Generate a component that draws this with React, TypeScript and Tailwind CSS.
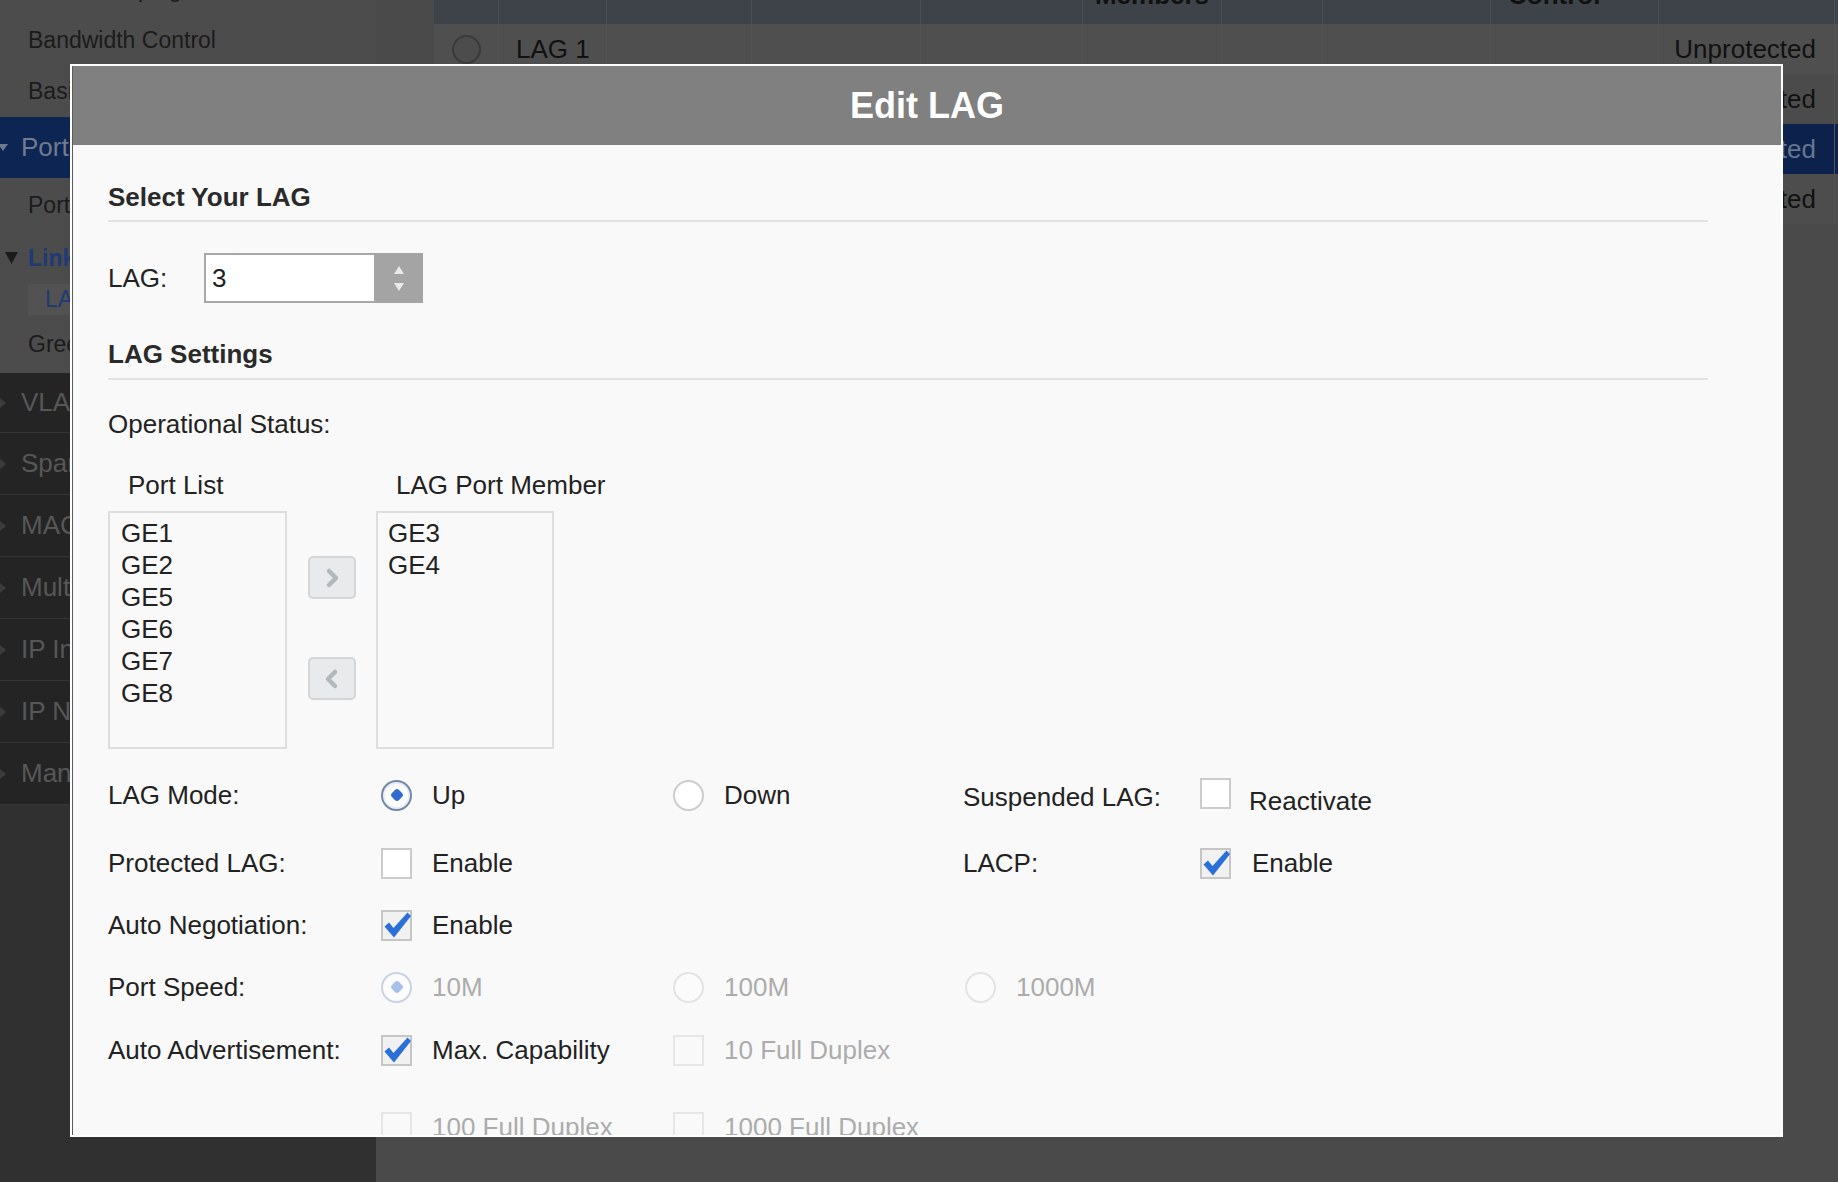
import React from 'react';

const colWidths = [65, 108, 145, 169, 162, 139, 101, 168, 168, 176];

const Radio = ({ checked = false, disabled = false }: { checked?: boolean; disabled?: boolean }) => {
  const ring = disabled
    ? checked
      ? 'border-[#c9d3e4] bg-[#fcfcfc]'
      : 'border-[#e3e3e3] bg-[#fbfbfb]'
    : checked
      ? 'border-[#7487a6] bg-white shadow-[inset_0_0_0_2px_#e9eef6]'
      : 'border-[#cdcdcd] bg-white';
  return (
    <span className={`flex h-[31px] w-[31px] shrink-0 items-center justify-center rounded-full border-2 ${ring}`}>
      {checked && (
        <span className={`h-[10px] w-[10px] rotate-45 rounded-[3px] ${disabled ? 'bg-[#a8c0ea]' : 'bg-[#2e6cd1]'}`} />
      )}
    </span>
  );
};

const Check = ({ checked = false, disabled = false }: { checked?: boolean; disabled?: boolean }) => {
  const box = disabled
    ? 'border-[#e6e6e6] bg-[#f9f9f9]'
    : checked
      ? 'border-[#c6c6c6] bg-[#f1f1f1]'
      : 'border-[#cbcbcb] bg-white';
  return (
    <span className={`relative block h-[31px] w-[31px] shrink-0 border-2 ${box}`}>
      {checked && (
        <svg viewBox="0 0 31 31" className="absolute -left-[2px] -top-[2px] h-[31px] w-[31px]">
          <path d="M3.5 16.5 L8 12.5 L12.5 18 L26.5 2.5 L30 6 L13 27.5 Z" fill="#2b6fd9" />
        </svg>
      )}
    </span>
  );
};

const ArrowButton = ({ dir }: { dir: 'left' | 'right' }) => (
  <div className="flex h-[43px] w-[48px] items-center justify-center rounded-[5px] border-2 border-[#d3d5d6] bg-[#e8eaeb]">
    <svg viewBox="0 0 16 22" className="h-[22px] w-[16px]">
      <path
        d={dir === 'right' ? 'M5 4 L12 11 L5 18' : 'M11 4 L4 11 L11 18'}
        stroke="#b2b9bd"
        strokeWidth="4.5"
        fill="none"
        strokeLinecap="round"
        strokeLinejoin="round"
      />
    </svg>
  </div>
);

const NavTriangle = () => (
  <svg viewBox="0 0 6 10" className="h-[10px] w-[6px] shrink-0">
    <path d="M0 0 L6 5 L0 10 Z" fill="#3c3c3c" />
  </svg>
);

const Sidebar = () => (
  <aside className="flex w-[376px] shrink-0 flex-col">
    <div className="flex h-[373px] flex-col bg-[#4c4c4c] text-[23px] text-[#1b1b1b]">
      <div className="-mt-[36px] flex h-[51px] items-center pl-[28px]">Traffic Shaping</div>
      <div className="flex h-[51px] items-center pl-[28px]">Bandwidth Control</div>
      <div className="flex h-[51px] items-center pl-[28px]">Basic Settings</div>
      <div className="flex h-[61px] items-center bg-[#0d2553] text-[26px] text-[#717a8e]">
        <svg viewBox="0 0 10 7" className="-ml-[2px] h-[7px] w-[10px]">
          <path d="M0 0 L10 0 L5 7 Z" fill="#6f7a90" />
        </svg>
        <span className="pl-[13px]">Port Management</span>
      </div>
      <div className="flex h-[54px] items-center pl-[28px]">Port Settings</div>
      <div className="flex h-[52px] items-center font-bold text-[#1f3a75]">
        <svg viewBox="0 0 13 12" className="ml-[5px] h-[12px] w-[13px]">
          <path d="M0 0 L13 0 L6.5 12 Z" fill="#1b1b1b" />
        </svg>
        <span className="pl-[10px]">Link Aggregation</span>
      </div>
      <div className="ml-[28px] flex h-[31px] items-center bg-[#525252] pl-[17px] text-[#1f3a75]">LAG Management</div>
      <div className="flex flex-1 items-center pl-[28px]">Green Ethernet</div>
    </div>
    <div className="bg-[#242424] text-[26px] text-[#575757]">
      {[
        'VLAN Management',
        'Spanning Tree',
        'MAC Address Tables',
        'Multicast',
        'IP Interface',
        'IP Network Services',
        'Management',
      ].map((item, idx) => (
        <div
          key={item}
          className={`flex items-center border-b border-[#363636] ${idx === 0 ? 'h-[60px]' : 'h-[62px]'}`}
        >
          <NavTriangle />
          <span className="whitespace-nowrap pl-[15px]">{item}</span>
        </div>
      ))}
    </div>
    <div className="flex-1 bg-[#303030]" />
  </aside>
);

const tableRows = [
  { bg: 'bg-[#4f4f4f]', text: 'text-[#111]', name: 'LAG 1' },
  { bg: 'bg-[#4b4b4b]', text: 'text-[#111]', name: 'LAG 2' },
  { bg: 'bg-[#0c224d]', text: 'text-[#66768f]', name: 'LAG 3' },
  { bg: 'bg-[#4d4d4d]', text: 'text-[#111]', name: 'LAG 4' },
];

const MainTable = () => (
  <main className="flex-1 bg-[#4a4a4a] pl-[58px]">
    <div className="flex h-[24px] bg-[#3e434a]">
      {colWidths.map((w, i) => (
        <div
          key={i}
          style={{ width: w }}
          className="h-[24px] shrink-0 overflow-hidden border-r border-[#4b5058] text-[26px] font-bold leading-[26px] text-[#111]"
        >
          {i === 5 && <div className="-mt-[18px] text-center">Members</div>}
          {i === 8 && <div className="-mt-[18px] pl-[17px]">Control</div>}
        </div>
      ))}
    </div>
    {tableRows.map((row) => (
      <div key={row.name} className={`flex h-[50px] ${row.bg} ${row.text} text-[26px]`}>
        {colWidths.map((w, i) => (
          <div
            key={i}
            style={{ width: w }}
            className="flex h-[50px] shrink-0 items-center border-r border-[#535353]"
          >
            {i === 0 && (
              <span className="ml-[18px] h-[29px] w-[29px] rounded-full border-2 border-[#3a3a3a] bg-[#4c4c4c]" />
            )}
            {i === 1 && <span className="whitespace-nowrap pl-[17px]">{row.name}</span>}
            {i === 9 && <span className="ml-auto pr-[18px]">Unprotected</span>}
          </div>
        ))}
      </div>
    ))}
  </main>
);

const Option = ({
  control,
  label,
  disabled = false,
  width,
}: {
  control: React.ReactNode;
  label: string;
  disabled?: boolean;
  width: string;
}) => (
  <div className={`flex items-center gap-[20px] ${width}`}>
    {control}
    <span className={`whitespace-nowrap ${disabled ? 'text-[#acacac]' : ''}`}>{label}</span>
  </div>
);

const EditLagModal = () => (
  <div className="absolute left-[70px] top-[64px] flex h-[1073px] w-[1713px] flex-col border-2 border-white">
    <div className="flex flex-1 flex-col overflow-hidden border-l border-[#5c5c5c]">
      <div className="flex h-[79px] shrink-0 items-center justify-center bg-[#808080] text-[36px] font-bold text-white">
        Edit LAG
      </div>
      <div className="flex-1 overflow-hidden bg-[#f9f9f9] pl-[35px] pr-[73px] pt-[37px] text-[26px] leading-[30px] text-[#222]">
        <h2 className="font-bold text-[#2a2a2a]">Select Your LAG</h2>
        <div className="mt-[8px] h-[2px] bg-[#e2e2e2]" />
        <div className="mt-[31px] flex h-[50px] items-center">
          <span className="w-[96px]">LAG:</span>
          <div className="flex h-[50px] w-[170px] items-center border-y-2 border-l-2 border-[#a7a7a7] bg-white pl-[6px]">
            3
          </div>
          <div className="flex h-[50px] w-[49px] flex-col items-center justify-center gap-[9px] bg-[#a4a4a4]">
            <svg viewBox="0 0 10 8" className="h-[8px] w-[10px]">
              <path d="M5 0 L10 8 L0 8 Z" fill="#e9e9e9" />
            </svg>
            <svg viewBox="0 0 10 8" className="h-[8px] w-[10px]">
              <path d="M0 0 L10 0 L5 8 Z" fill="#e9e9e9" />
            </svg>
          </div>
        </div>

        <h2 className="mt-[36px] font-bold text-[#2a2a2a]">LAG Settings</h2>
        <div className="mt-[9px] h-[2px] bg-[#e2e2e2]" />
        <div className="mt-[29px]">Operational Status:</div>

        <div className="mt-[31px] flex">
          <div className="w-[179px]">
            <div className="whitespace-nowrap pl-[20px]">Port List</div>
            <div className="mt-[11px] h-[238px] border-2 border-[#dedede] pl-[11px] pt-[4px] leading-[32px]">
              {['GE1', 'GE2', 'GE5', 'GE6', 'GE7', 'GE8'].map((p) => (
                <div key={p}>{p}</div>
              ))}
            </div>
          </div>
          <div className="flex w-[89px] flex-col gap-[58px] pl-[21px] pt-[86px]">
            <ArrowButton dir="right" />
            <ArrowButton dir="left" />
          </div>
          <div className="w-[178px]">
            <div className="whitespace-nowrap pl-[20px]">LAG Port Member</div>
            <div className="mt-[11px] h-[238px] border-2 border-[#dedede] pl-[10px] pt-[4px] leading-[32px]">
              {['GE3', 'GE4'].map((p) => (
                <div key={p}>{p}</div>
              ))}
            </div>
          </div>
        </div>

        <div className="mt-[16px] flex h-[60px] items-center">
          <span className="w-[273px]">LAG Mode:</span>
          <Option width="w-[292px]" control={<Radio checked />} label="Up" />
          <Option width="w-[290px]" control={<Radio />} label="Down" />
          <span className="w-[237px] translate-y-[2px] whitespace-nowrap">Suspended LAG:</span>
          <div className="flex items-center gap-[18px]">
            <span className="-translate-y-[2px]">
              <Check />
            </span>
            <span className="translate-y-[6px]">Reactivate</span>
          </div>
        </div>

        <div className="mt-[8px] flex h-[60px] items-center">
          <span className="w-[273px]">Protected LAG:</span>
          <Option width="w-[292px]" control={<Check />} label="Enable" />
          <div className="w-[290px]" />
          <span className="w-[237px]">LACP:</span>
          <div className="flex items-center gap-[21px]">
            <Check checked />
            <span>Enable</span>
          </div>
        </div>

        <div className="mt-[2px] flex h-[60px] items-center">
          <span className="w-[273px]">Auto Negotiation:</span>
          <Option width="w-[292px]" control={<Check checked />} label="Enable" />
        </div>

        <div className="mt-[2px] flex h-[60px] items-center">
          <span className="w-[273px]">Port Speed:</span>
          <Option width="w-[292px]" control={<Radio checked disabled />} label="10M" disabled />
          <Option width="w-[292px]" control={<Radio disabled />} label="100M" disabled />
          <Option width="w-[240px]" control={<Radio disabled />} label="1000M" disabled />
        </div>

        <div className="mt-[3px] flex h-[60px] items-center">
          <span className="w-[273px]">Auto Advertisement:</span>
          <Option width="w-[292px]" control={<Check checked />} label="Max. Capability" />
          <Option width="w-[290px]" control={<Check disabled />} label="10 Full Duplex" disabled />
        </div>

        <div className="mt-[17px] flex h-[60px] items-center">
          <span className="w-[273px]" />
          <Option width="w-[292px]" control={<Check disabled />} label="100 Full Duplex" disabled />
          <Option width="w-[290px]" control={<Check disabled />} label="1000 Full Duplex" disabled />
        </div>
      </div>
    </div>
  </div>
);

export default function App() {
  return (
    <div className="relative h-[1182px] w-[1838px] overflow-hidden bg-[#4a4a4a] font-['Liberation_Sans',Arial,sans-serif]">
      <div className="flex h-full">
        <Sidebar />
        <MainTable />
      </div>
      <EditLagModal />
    </div>
  );
}
